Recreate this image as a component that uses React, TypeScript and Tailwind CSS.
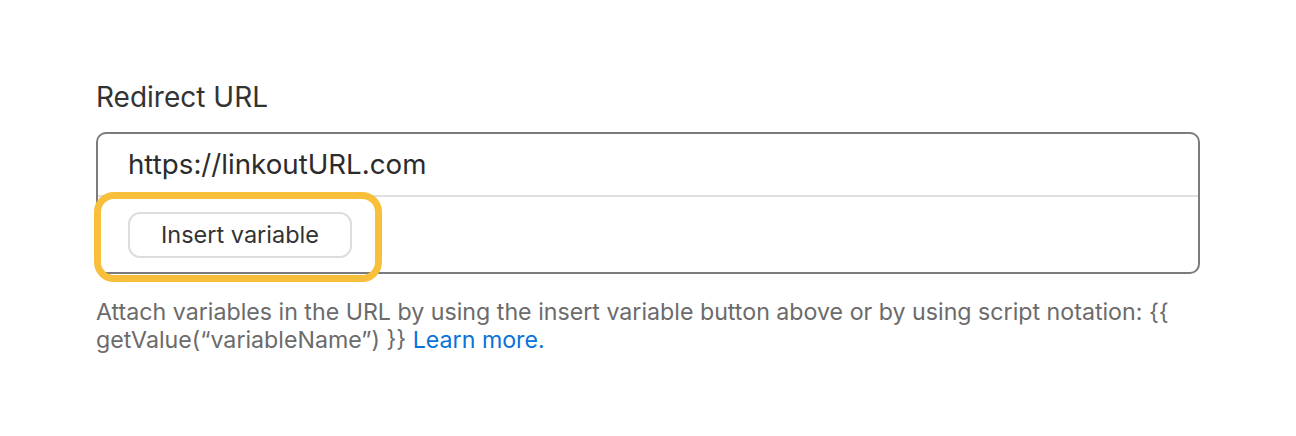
import React from 'react';

// Redirect URL field with the "Insert variable" button called out
export default function App() {
  return (
    <div
      className="min-h-[436px] bg-white px-24 pt-[80px]"
      style={{ fontFamily: 'Inter, "Noto Sans", Arial, sans-serif' }}
    >
      <label className="block text-[28px] leading-[34px] text-[#333333]">Redirect URL</label>

      <div className="mt-[18px] rounded-[10px] border-2 border-[#7c7c7c]">
        <div className="flex h-[63px] items-center border-b-2 border-[#e0e0e0] px-[30px] text-[27.7px] text-[#2b2b2b]">
          https://linkoutURL.com
        </div>
        <div className="px-[30px] pt-[15px] pb-[14px]">
          <div className="relative inline-block align-top">
            <button className="block h-[46px] w-[224px] rounded-[12px] border-2 border-[#dddddd] bg-white text-[23.5px] text-[#333333]">
              Insert variable
            </button>
            {/* highlight ring */}
            <span className="pointer-events-none absolute -top-[20px] -bottom-[24px] -left-[34px] -right-[30px] rounded-[20px] border-[7px] border-[#f8bf3b]" />
          </div>
        </div>
      </div>

      <p className="mt-[24px] text-[23.2px] leading-[28px] text-[#6b6b6b]">
        Attach variables in the URL by using the insert variable button above or by using script notation: {'{{'}{' '}
        getValue(“variableName”) {'}}'}{' '}
        <a className="text-[#0b72d9]" href="#">
          Learn more.
        </a>
      </p>
    </div>
  );
}
